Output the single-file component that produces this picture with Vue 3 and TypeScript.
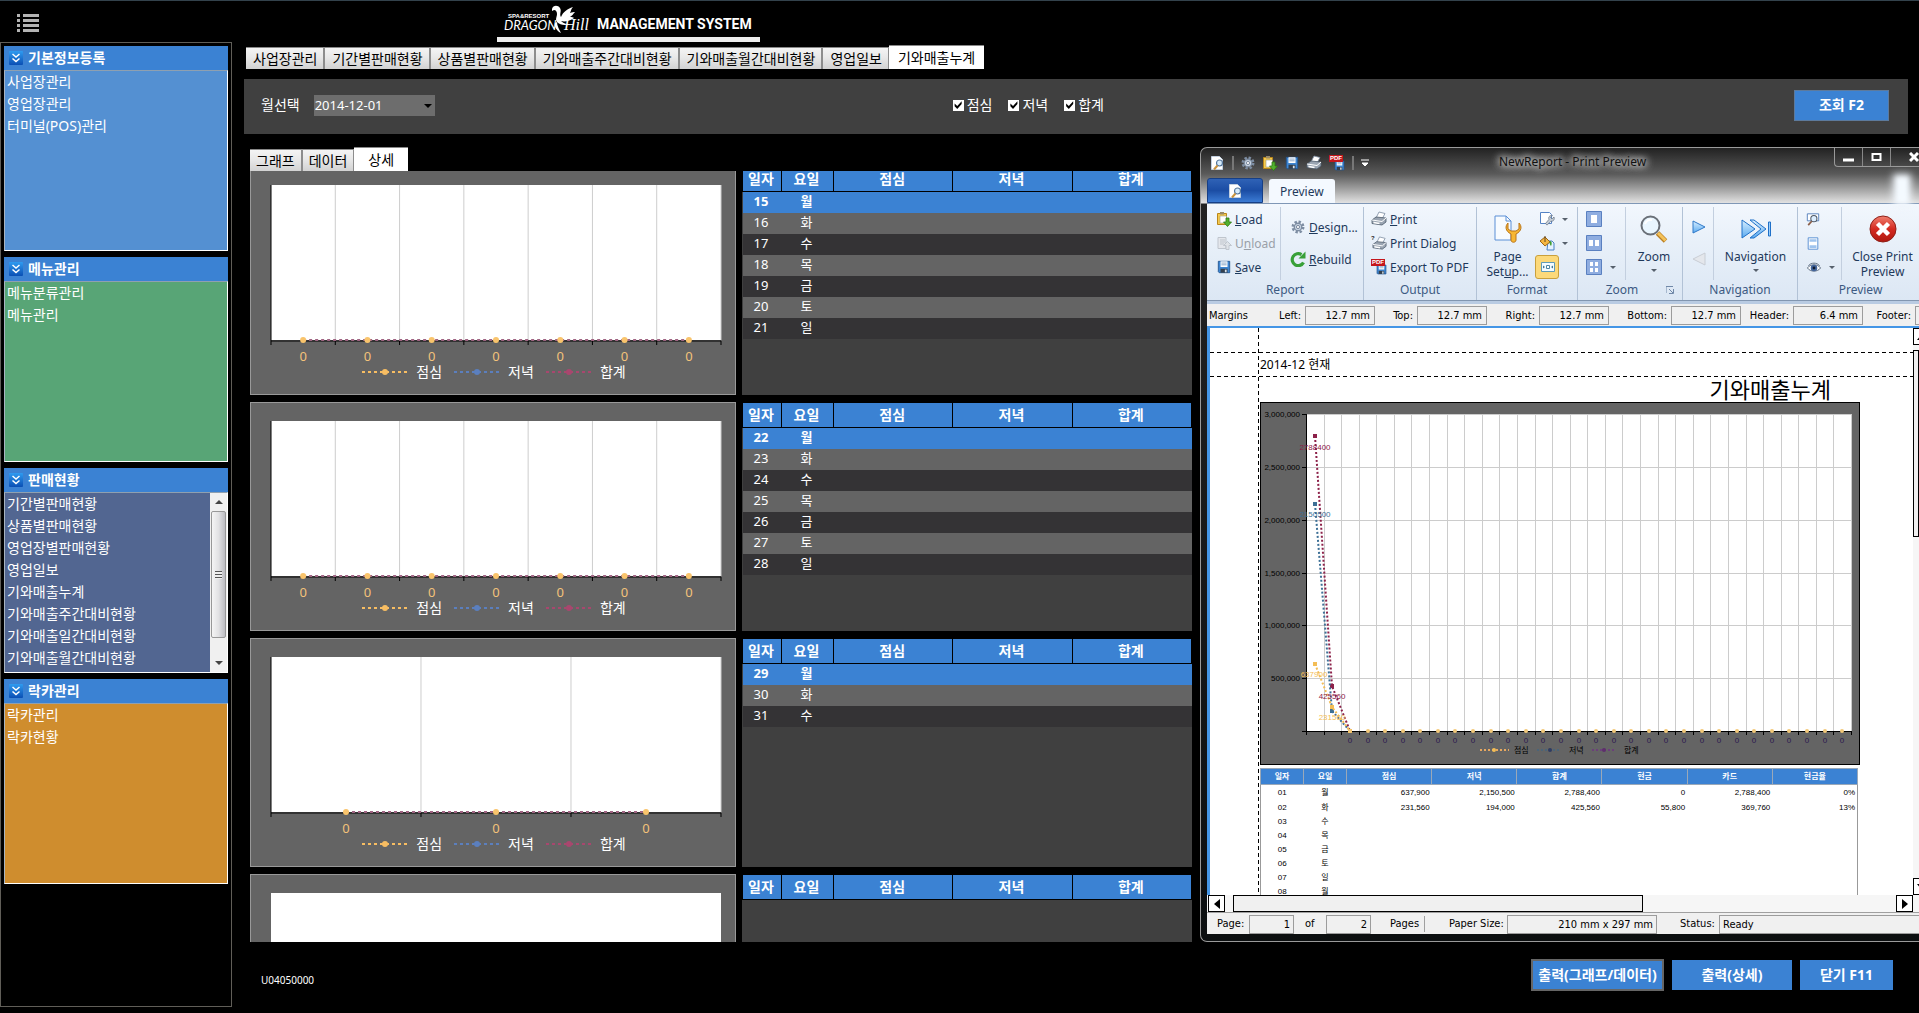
<script setup lang="ts">
import { ref } from 'vue'

interface MenuPanel {
  title: string
  tone: string
  items: string[]
  scroll?: boolean
}

interface Day {
  date: string
  name: string
}

const panels: MenuPanel[] = [
  { title: '기본정보등록', tone: 'blue', items: ['사업장관리', '영업장관리', '터미널(POS)관리'] },
  { title: '메뉴관리', tone: 'green', items: ['메뉴분류관리', '메뉴관리'] },
  {
    title: '판매현황',
    tone: 'indigo',
    scroll: true,
    items: [
      '기간별판매현황',
      '상품별판매현황',
      '영업장별판매현황',
      '영업일보',
      '기와매출누계',
      '기와매출주간대비현황',
      '기와매출일간대비현황',
      '기와매출월간대비현황',
    ],
  },
  { title: '락카관리', tone: 'orange', items: ['락카관리', '락카현황'] },
]

const screens = ['사업장관리', '기간별판매현황', '상품별판매현황', '기와매출주간대비현황', '기와매출월간대비현황', '영업일보', '기와매출누계']
const activeScreen = ref('기와매출누계')
const views = ['그래프', '데이터', '상세']
const activeView = ref('상세')
const month = ref('2014-12-01')

const series = [
  { name: '점심', color: '#f7bd62', on: ref(true) },
  { name: '저녁', color: '#5b7fbe', on: ref(true) },
  { name: '합계', color: '#a8476e', on: ref(true) },
]

const dayNames = ['월', '화', '수', '목', '금', '토', '일']
const week = (start: number, count: number): Day[] =>
  Array.from({ length: count }, (_, i) => ({ date: String(start + i), name: dayNames[i] }))
const weeks: Day[][] = [week(15, 7), week(22, 7), week(29, 3), []]
const columns = ['일자', '요일', '점심', '저녁', '합계']

const pct = (n: number, total: number): string => `${(n / total) * 100}%`

const margins = [
  { id: 'left', label: 'Left:', value: '12.7 mm' },
  { id: 'top', label: 'Top:', value: '12.7 mm' },
  { id: 'right', label: 'Right:', value: '12.7 mm' },
  { id: 'bottom', label: 'Bottom:', value: '12.7 mm' },
  { id: 'header', label: 'Header:', value: '6.4 mm' },
  { id: 'footer', label: 'Footer:', value: '' },
]

/* Monthly report chart: 31 day slots, scale 0 to 3,000,000 */
const plot = { x: 46, y: 12, w: 545, h: 317 }
const slots = 31
const slotX = (i: number): number => Math.round(plot.x + (plot.w * i) / slots)
const pointX = (i: number): number => Math.round(plot.x + (plot.w * (i + 0.5)) / slots)
const valueY = (v: number): number => Math.round(plot.y + plot.h * (1 - v / 3000000))
const ticks = [3000000, 2500000, 2000000, 1500000, 1000000, 500000, 0]
const lines = [
  { color: '#8c2149', values: [2788400, 425560, 0] },
  { color: '#3d7096', values: [2150500, 194000, 0] },
  { color: '#f3bd55', values: [637900, 231560, 0] },
]
const path = (values: number[]): string => values.map((v, i) => `${pointX(i)},${valueY(v)}`).join(' ')

const reportColumns = ['일자', '요일', '점심', '저녁', '합계', '현금', '카드', '현금율']
const reportRows: string[][] = [
  ['01', '월', '637,900', '2,150,500', '2,788,400', '0', '2,788,400', '0%'],
  ['02', '화', '231,560', '194,000', '425,560', '55,800', '369,760', '13%'],
  ['03', '수', '', '', '', '', '', ''],
  ['04', '목', '', '', '', '', '', ''],
  ['05', '금', '', '', '', '', '', ''],
  ['06', '토', '', '', '', '', '', ''],
  ['07', '일', '', '', '', '', '', ''],
  ['08', '월', '', '', '', '', '', ''],
]
</script>

<template>
  <div class="app">
    <svg class="defs" aria-hidden="true">
      <defs>
        <linearGradient id="g-red" x1="0" y1="0" x2="0" y2="1">
          <stop offset="0" stop-color="#f08070" /><stop offset="0.5" stop-color="#d42a20" /><stop offset="1" stop-color="#b01810" />
        </linearGradient>
        <linearGradient id="g-play" x1="0" y1="0" x2="0" y2="1">
          <stop offset="0" stop-color="#d8efff" /><stop offset="1" stop-color="#5aaaf0" />
        </linearGradient>
        <linearGradient id="g-chevron" x1="0" y1="0" x2="0" y2="1">
          <stop offset="0" stop-color="#2f9bf0" /><stop offset="1" stop-color="#0a4fb4" />
        </linearGradient>
      </defs>
      <symbol id="i-chevrons" viewBox="0 0 14 14">
        <rect width="14" height="14" rx="1" fill="url(#g-chevron)" />
        <path d="M3.500 3l3.500 3 3.500-3M3.500 7.500l3.500 3 3.500-3" fill="none" stroke="#fff" stroke-width="1.500" />
      </symbol>
      <symbol id="i-doc" viewBox="0 0 16 16">
        <path d="M2.500 1.500h8l3 3v10h-11z" fill="#fff" stroke="#c3d0e0" />
        <circle cx="10.500" cy="8" r="3" fill="#d6ebfb" stroke="#55779d" stroke-width="1.200" />
        <path d="M8.500 10.500L5 14.500" stroke="#c9933f" stroke-width="2" />
      </symbol>
      <symbol id="i-gear" viewBox="0 0 16 16">
        <circle cx="8" cy="8" r="6" fill="none" stroke="#7d8da2" stroke-width="2.800" stroke-dasharray="2.700 2" />
        <circle cx="8" cy="8" r="4.300" fill="#c6d2e0" stroke="#7d8da2" stroke-width="1.500" />
        <circle cx="8" cy="8" r="1.800" fill="#fff" stroke="#6d7d92" />
      </symbol>
      <symbol id="i-load" viewBox="0 0 16 16">
        <path d="M1.500 2.500h9v11h-9z" fill="#f6c94b" stroke="#b8861b" />
        <path d="M4 5h6.500v7H4z" fill="#fff" stroke="#9c9c8c" stroke-width="0.600" />
        <path d="M4 1h4v2.500H4z" fill="#9a8a68" />
        <path d="M10 7h3v4h2.500l-4 4.500-4-4.500H10z" fill="#52b02f" stroke="#2d7812" stroke-width="0.800" />
      </symbol>
      <symbol id="i-unload" viewBox="0 0 16 16">
        <path d="M2 2.500h8v11H2z" fill="#e4e7ec" stroke="#bfc5cd" />
        <path d="M4 5h5M4 7h5M4 9h4" stroke="#bfc5cd" />
        <path d="M10 14.500v-4H7.500l4-4 4 4H13v4z" fill="#dfe3e8" stroke="#b8bec6" stroke-width="0.800" />
      </symbol>
      <symbol id="i-save" viewBox="0 0 16 16">
        <path d="M1.500 1.500h13v13h-12l-1-1z" fill="#3e86d2" stroke="#22558f" />
        <path d="M4 1.500h8V8H4z" fill="#fff" /><path d="M5 3.500h6M5 5.500h6" stroke="#7c9cc0" />
        <path d="M4 10h8v4.500H4z" fill="#34404e" /><path d="M9 11h2v3H9z" fill="#d8e2ec" />
      </symbol>
      <symbol id="i-print" viewBox="0 0 16 16">
        <path d="M5 7l3-6 6 1.500L11 8z" fill="#fff" stroke="#78899e" stroke-width="0.800" />
        <path d="M1 9l4-3 10 1v4l-4 3-10-1.500z" fill="#9aa5b2" stroke="#4d5b6b" stroke-width="0.800" />
        <path d="M1 9l10 1.500L15 7" fill="none" stroke="#fff" />
        <path d="M2.500 11.500l6 1" stroke="#fff" stroke-width="1.500" />
      </symbol>
      <symbol id="i-wrench" viewBox="0 0 16 16">
        <path d="M1.500 1.500h9l2 2v9h-11z" fill="#fff" stroke="#5583c4" />
        <path d="M15 6l-2 2-1.500-1.500 2-2c-3-.500-4.500 2-3.500 3.800L6.500 12.500l1.500 1.600 4-4c2 .700 4-1.500 3-4.100z" fill="#c3ccd6" stroke="#64717f" stroke-width="0.700" />
      </symbol>
      <symbol id="i-fill" viewBox="0 0 16 16">
        <path d="M9 6h4l2 2v7H8z" fill="#e4f2ff" stroke="#4b82c6" />
        <path d="M1 6l5-4 5 5-5 4z" fill="#f5b641" stroke="#9c6516" />
        <path d="M6 1v6" stroke="#5c4520" /><path d="M11 6c2 0 2 3 1 5-1-1-2-3-1-5z" fill="#3e9c2f" />
      </symbol>
      <symbol id="i-fit" viewBox="0 0 16 16">
        <path d="M1.500 3.500h13v9h-13z" fill="#f3fbff" stroke="#5f9bb8" />
        <path d="M6.500 6.500h3v3h-3z" fill="#fff" stroke="#4f87a5" />
        <path d="M3 6.500v3L5 8zM13 6.500v3L11 8z" fill="#3f7594" />
      </symbol>
      <symbol id="i-glass" viewBox="0 0 28 28">
        <path d="M17.500 18l8 8" stroke="#b97f22" stroke-width="5" />
        <path d="M18 18l7.500 7.500" stroke="#f4c25a" stroke-width="3" />
        <circle cx="10.500" cy="10.500" r="9" fill="#e9f6ff" stroke="#6a7078" stroke-width="2" />
        <path d="M5 9c1-3 4-5 7-4" fill="none" stroke="#fff" stroke-width="2" />
      </symbol>
      <symbol id="i-eye" viewBox="0 0 16 16">
        <path d="M1 8.500C4 4 12 4 15 8.500 12 13 4 13 1 8.500z" fill="#fff" stroke="#58677c" />
        <circle cx="8" cy="8.500" r="3.500" fill="#43659b" /><circle cx="8" cy="8.500" r="1.500" fill="#101c30" />
        <path d="M2 6c3-3.500 9-3.500 12 0" fill="none" stroke="#58677c" />
      </symbol>
      <symbol id="i-find" viewBox="0 0 16 16">
        <path d="M1.500 1.500h13v8h-13z" fill="#fff" stroke="#4c79b8" />
        <circle cx="9" cy="7" r="3.500" fill="#dceeff" stroke="#4f5965" stroke-width="1.200" />
        <path d="M6.500 10L2.500 14.500" stroke="#8b5f48" stroke-width="2" />
      </symbol>
      <symbol id="i-bands" viewBox="0 0 16 16">
        <path d="M2.500 1.500h11v13h-11z" fill="#fff" stroke="#4c87d0" />
        <path d="M4 3h8v3H4zM4 10h8v3H4z" fill="#9fc4ee" />
      </symbol>
    </svg>

    <header class="top">
      <button class="menu-toggle" aria-label="메뉴">
        <svg width="22" height="18">
          <path d="M0 1.500h3M6 1.500h16M0 6.500h3M6 6.500h16M0 11.500h3M6 11.500h16M0 16.500h3M6 16.500h16" stroke="#b4b4b4" stroke-width="3" />
        </svg>
      </button>
      <div class="brand">
        <svg class="logo" width="86" height="32" role="img" aria-label="Dragon Hill">
          <text x="4" y="17" class="logo-tiny">SPA&amp;RESORT</text>
          <text x="0" y="29" class="logo-main">DRAGON</text>
          <text x="60" y="29" class="logo-script">Hill</text>
          <path d="M48 8c1-4 6-4 8-1 2 3-1 6 1 9 2-5 6-8 12-10-2 2-2 4-3 6 2-1 4-1 5-1-2 2-3 4-5 5 2 0 3 0 4 1-4 3-9 4-13 3 3 3 6 3 9 3-5 2-10 1-13-2-2-3 0-5 0-8 0-2-1-4-3-4l-2 1zM53 21c0 4 2 7 4 11-4-2-7-6-6-10z" fill="#fff" />
        </svg>
        <h1>MANAGEMENT SYSTEM</h1>
      </div>
    </header>

    <div class="body">
      <aside class="sidebar">
        <section v-for="p in panels" :key="p.title" class="panel">
          <h2><svg width="14" height="14"><use href="#i-chevrons" /></svg>{{ p.title }}</h2>
          <div class="panel-body" :class="p.tone">
            <ul>
              <li v-for="item in p.items" :key="item"><a href="#">{{ item }}</a></li>
            </ul>
            <div v-if="p.scroll" class="vscroll" aria-hidden="true">
              <span class="arrow up"></span>
              <span class="vthumb"><i></i></span>
              <span class="arrow down"></span>
            </div>
          </div>
        </section>
      </aside>

      <main class="main">
        <nav class="tabs screens">
          <button v-for="s in screens" :key="s" :class="{ active: s === activeScreen }" @click="activeScreen = s">{{ s }}</button>
        </nav>

        <form class="filter" @submit.prevent>
          <label for="month">월선택</label>
          <span class="combo">
            <select id="month" v-model="month"><option>2014-12-01</option></select>
          </span>
          <div class="checks">
            <label v-for="s in series" :key="s.name"><input v-model="s.on.value" type="checkbox" />{{ s.name }}</label>
          </div>
          <button class="action search">조회 F2</button>
        </form>

        <nav class="tabs sub">
          <button v-for="v in views" :key="v" :class="{ active: v === activeView }" @click="activeView = v">{{ v }}</button>
        </nav>

        <div class="scroller">
          <div class="weeks">
            <section v-for="(days, w) in weeks" :key="w" class="week">
              <div class="chart">
                <svg class="plot" width="100%" height="176">
                  <rect width="100%" height="155" fill="#fff" />
                  <template v-if="days.length">
                    <line v-for="i in days.length" :key="i" :x1="pct(i, days.length)" :x2="pct(i, days.length)" y1="0" y2="155" stroke="#cdcdcd" />
                    <path d="M0 0V160" stroke="#000" />
                    <line x1="0" x2="100%" y1="156" y2="156" stroke="#000" />
                    <line v-for="i in days.length" :key="'t' + i" :x1="pct(i, days.length)" :x2="pct(i, days.length)" y1="156" y2="160" stroke="#000" />
                    <line :x1="pct(0.5, days.length)" :x2="pct(days.length - 0.5, days.length)" y1="155" y2="155" stroke="#a06583" stroke-width="2" stroke-dasharray="3 3" />
                    <template v-for="(d, i) in days" :key="d.date">
                      <circle :cx="pct(i + 0.5, days.length)" cy="155" r="3" fill="#f9c46c" />
                      <text :x="pct(i + 0.5, days.length)" y="176" class="zero">0</text>
                    </template>
                  </template>
                </svg>
                <div v-if="days.length" class="legend">
                  <span v-for="s in series" :key="s.name">
                    <svg width="47" height="8">
                      <path d="M0 4h47" :stroke="s.color" stroke-width="2" stroke-dasharray="3 3" />
                      <circle cx="23" cy="4" r="3" :fill="s.color" />
                    </svg>{{ s.name }}
                  </span>
                </div>
              </div>
              <div class="grid-box">
                <table class="days">
                  <colgroup><col class="c-date" /><col class="c-day" /><col /><col /><col /></colgroup>
                  <thead><tr><th v-for="c in columns" :key="c">{{ c }}</th></tr></thead>
                  <tbody>
                    <tr v-for="d in days" :key="d.date"><td>{{ d.date }}</td><td>{{ d.name }}</td><td></td><td></td><td></td></tr>
                  </tbody>
                </table>
              </div>
            </section>
          </div>
        </div>

        <footer class="foot">
          <span class="code">U04050000</span>
          <button class="action wide">출력(그래프/데이터)</button>
          <button class="action mid">출력(상세)</button>
          <button class="action small">닫기 F11</button>
        </footer>
      </main>
    </div>

    <section class="window" aria-label="Print Preview">
      <div class="titlebar">
        <div class="quick">
          <svg width="16" height="16"><use href="#i-doc" /></svg>
          <i class="vsep"></i>
          <svg width="14" height="14"><use href="#i-gear" /></svg>
          <svg width="16" height="16"><use href="#i-load" /></svg>
          <svg width="14" height="14"><use href="#i-save" /></svg>
          <svg width="16" height="16"><use href="#i-print" /></svg>
          <span class="pdf"><b>PDF</b><svg width="11" height="11"><use href="#i-save" /></svg></span>
          <i class="vsep"></i>
          <svg width="8" height="8"><path d="M0 1h8M1 4h6L4 7z" stroke="#fff" fill="#fff" /></svg>
        </div>
        <p>NewReport - Print Preview</p>
        <div class="caption">
          <button aria-label="Minimize"><svg width="11" height="11"><path d="M0 8h11" stroke="#fff" stroke-width="3" /></svg></button>
          <button aria-label="Maximize"><svg width="11" height="11"><path d="M1.500 2h8v6h-8z" fill="none" stroke="#fff" stroke-width="2" /></svg></button>
          <button aria-label="Close" class="x"><svg width="10" height="11"><path d="M1 1l8 8M9 1L1 9" stroke="#fff" stroke-width="3" /></svg></button>
        </div>
      </div>
      <div class="ribbon-tabs">
        <button class="file" aria-label="File"><svg width="16" height="16"><use href="#i-doc" /></svg></button>
        <button class="tab">Preview</button>
        <i class="glow"></i>
      </div>

      <div class="ribbon">
        <div class="group g-report">
          <div class="tools">
            <div class="stack">
              <button><svg width="16" height="16"><use href="#i-load" /></svg><u>L</u>oad</button>
              <button disabled><svg width="16" height="16"><use href="#i-unload" /></svg>U<u>n</u>load</button>
              <button><svg width="16" height="14"><use href="#i-save" /></svg><u>S</u>ave</button>
            </div>
            <div class="stack two line">
              <button><svg width="16" height="14"><use href="#i-gear" /></svg><u>D</u>esign...</button>
              <button>
                <svg width="16" height="16" viewBox="0 0 16 16">
                  <path d="M13.500 11.500A6 6 0 1 1 11.500 3.600" fill="none" stroke="#38a038" stroke-width="3.200" />
                  <path d="M8.500 7.500h7V.5z" fill="#38a038" />
                </svg><u>R</u>ebuild
              </button>
            </div>
          </div>
          <h3>Report</h3>
        </div>
        <div class="group g-output">
          <div class="tools">
            <div class="stack tight">
              <button><svg width="16" height="16"><use href="#i-print" /></svg><u>P</u>rint</button>
              <button><span class="pdf help"><em>?</em><svg width="15" height="15"><use href="#i-print" /></svg></span>Print Dialog</button>
              <button><span class="pdf"><b>PDF</b><svg width="11" height="11"><use href="#i-save" /></svg></span>Export To PDF</button>
            </div>
          </div>
          <h3>Output</h3>
        </div>
        <div class="group g-format">
          <div class="tools">
            <button class="big">
              <svg width="28" height="28" viewBox="0 0 28 28">
                <path d="M1 1h11l5 5v19H1z" fill="#f7fbff" stroke="#5a8fd6" />
                <path d="M12 1v5h5" fill="none" stroke="#5a8fd6" />
                <path d="M14 8c-3 3-3 8 3 11v6c0 3 5 3 5 0v-6c6-3 6-8 3-11v6l-3 2h-5l-3-2z" fill="#f7b733" stroke="#b9751a" />
              </svg>
              <span>Page<br />Set<u>u</u>p...</span>
            </button>
            <div class="icons">
              <button aria-label="Scale"><svg width="16" height="16"><use href="#i-wrench" /></svg><i class="drop"></i></button>
              <button aria-label="Background"><svg width="16" height="16"><use href="#i-fill" /></svg><i class="drop"></i></button>
              <button aria-label="Shrink to page" class="on"><svg width="16" height="16"><use href="#i-fit" /></svg></button>
            </div>
          </div>
          <h3>Format</h3>
        </div>
        <div class="group g-zoom">
          <div class="tools">
            <div class="icons">
              <button aria-label="One page"><svg width="16" height="16"><path d="M.5.5h15v15H.5z" fill="#8fade0" stroke="#5a80c0" /><path d="M5 4h6v8H5z" fill="#fff" /></svg></button>
              <button aria-label="Two pages"><svg width="16" height="16"><path d="M.5.5h15v15H.5z" fill="#8fade0" stroke="#5a80c0" /><path d="M3 5h4v6H3zM9 5h4v6H9z" fill="#fff" /></svg></button>
              <button aria-label="Many pages"><svg width="16" height="16"><path d="M.5.5h15v15H.5z" fill="#8fade0" stroke="#5a80c0" /><path d="M4 3h3v4H4zM9 3h3v4H9zM4 9h3v4H4zM9 9h3v4H9z" fill="#fff" /></svg><i class="drop far"></i></button>
            </div>
            <button class="big line"><svg width="28" height="28"><use href="#i-glass" /></svg><span>Zoom</span><i class="drop"></i></button>
          </div>
          <div class="caption-row">
            <h3>Zoom</h3>
            <svg width="8" height="8"><path d="M0 7V.5h7M3 3l4 4M7.500 3v4.500H3" fill="none" stroke="#7088a8" /></svg>
          </div>
        </div>
        <div class="group g-nav">
          <div class="tools">
            <div class="stack two play">
              <button aria-label="Next"><svg width="14" height="14"><path d="M1 1l12 6-12 6z" fill="url(#g-play)" stroke="#2f78c8" /></svg></button>
              <button aria-label="Previous"><svg width="14" height="14"><path d="M13 1L1 7l12 6z" fill="#e4e7ec" stroke="#c8cdd4" /></svg></button>
            </div>
            <button class="big line">
              <svg width="32" height="28" viewBox="0 0 32 28">
                <path d="M2 5l13 9-13 9z" fill="url(#g-play)" stroke="#1f70c8" />
                <path d="M10 5h4l12 9-12 9h-4l11-9z" fill="url(#g-play)" stroke="#1f70c8" />
                <path d="M28.500 7h2v14h-2z" fill="#9bcdf8" stroke="#1f70c8" />
              </svg><span>Navigation</span><i class="drop"></i>
            </button>
          </div>
          <h3>Navigation</h3>
        </div>
        <div class="group g-preview">
          <div class="tools">
            <div class="icons">
              <button aria-label="Find"><svg width="14" height="15"><use href="#i-find" /></svg></button>
              <button aria-label="Bands"><svg width="14" height="15"><use href="#i-bands" /></svg></button>
              <button aria-label="Show"><svg width="16" height="15"><use href="#i-eye" /></svg><i class="drop"></i></button>
            </div>
            <button class="big line">
              <svg width="28" height="28"><circle cx="14" cy="14" r="13" fill="url(#g-red)" stroke="#8e2018" /><path d="M8.500 8.500l11 11M19.500 8.500l-11 11" stroke="#fff" stroke-width="4.500" /></svg>
              <span>Close Print<br />Preview</span>
            </button>
          </div>
          <h3>Preview</h3>
        </div>
      </div>

      <div class="margins">
        <span class="cap">Margins</span>
        <template v-for="m in margins" :key="m.id">
          <label :for="'m-' + m.id">{{ m.label }}</label>
          <input :id="'m-' + m.id" :value="m.value" readonly />
        </template>
      </div>

      <div class="view">
        <div class="sheet">
          <p class="asof">2014-12 현재</p>
          <h4>기와매출누계</h4>
          <svg class="report-chart" width="600" height="363">
            <rect x="0.500" y="0.500" width="599" height="362" fill="#646464" stroke="#000" />
            <rect :x="plot.x" :y="plot.y" :width="plot.w" :height="plot.h" fill="#fff" />
            <g shape-rendering="crispEdges">
              <line v-for="i in slots" :key="i" :x1="slotX(i)" :x2="slotX(i)" :y1="plot.y" :y2="plot.y + plot.h" stroke="#ccc" />
              <line v-for="t in ticks" :key="t" :x1="plot.x" :x2="plot.x + plot.w" :y1="valueY(t)" :y2="valueY(t)" stroke="#ccc" />
              <line v-for="t in ticks" :key="'k' + t" :x1="plot.x - 4" :x2="plot.x" :y1="valueY(t)" :y2="valueY(t)" stroke="#000" />
              <line v-for="i in slots" :key="'b' + i" :x1="slotX(i)" :x2="slotX(i)" y1="329" y2="333" stroke="#000" />
              <path d="M46 12V333M46 329H591" stroke="#000" />
            </g>
            <text v-for="t in ticks.slice(0, 6)" :key="'l' + t" x="40" :y="valueY(t) + 3" class="axis">{{ t.toLocaleString('en-US') }}</text>
            <g v-for="l in lines" :key="l.color">
              <polyline :points="path(l.values)" fill="none" :stroke="l.color" stroke-width="2" stroke-dasharray="2 2" />
              <rect v-for="(v, i) in l.values" :key="i" :x="pointX(i) - 2" :y="valueY(v) - 2" width="4" height="4" :fill="l.color" />
            </g>
            <g class="mark">
              <text x="55" y="48" fill="#8c2149">2788400</text>
              <text x="55" y="115" fill="#3d7096">2150500</text>
              <text x="54" y="275" fill="#f3bd55">637900</text>
              <text x="72" y="297" fill="#8c2149">425560</text>
              <text x="72" y="318" fill="#f3bd55">231560</text>
              <template v-for="i in slots - 2" :key="i">
                <circle :cx="pointX(i + 1)" cy="329" r="2" fill="#f3c878" />
                <text :x="pointX(i + 1)" y="341" fill="#2c1a50">0</text>
              </template>
            </g>
            <g stroke-width="2" stroke-dasharray="2 2">
              <path d="M220 348h29" stroke="#e8a860" /><path d="M277 348h24" stroke="#4b6478" /><path d="M332 348h24" stroke="#6b3f7a" />
            </g>
            <circle cx="234" cy="348" r="2" fill="#f3bd55" /><circle cx="290" cy="348" r="2" fill="#2f3c62" /><circle cx="344" cy="348" r="2" fill="#5e2f6c" />
            <g class="mini"><text x="254" y="351">점심</text><text x="309" y="351">저녁</text><text x="364" y="351">합계</text></g>
          </svg>
          <table class="report">
            <colgroup><col class="r-date" /><col class="r-date" /><col /><col /><col /><col /><col /><col /></colgroup>
            <thead><tr><th v-for="c in reportColumns" :key="c">{{ c }}</th></tr></thead>
            <tbody>
              <tr v-for="r in reportRows" :key="r[0]"><td v-for="(c, i) in r" :key="i">{{ c }}</td></tr>
            </tbody>
          </table>
        </div>
        <div class="side-scroll" aria-hidden="true">
          <span class="sq"><svg width="10" height="6"><path d="M0 6h10L5 0z" /></svg></span>
          <span class="thumb"></span><span class="fill"></span>
          <span class="sq"><svg width="10" height="6"><path d="M0 0h10L5 6z" /></svg></span>
        </div>
      </div>
      <div class="h-scroll" aria-hidden="true">
        <span class="sq"><svg width="6" height="10"><path d="M6 0v10L0 5z" /></svg></span>
        <span class="thumb"></span><span class="fill"></span>
        <span class="sq"><svg width="6" height="10"><path d="M0 0v10l6-5z" /></svg></span>
      </div>
      <div class="status">
        <label for="page">Page:</label><input id="page" class="num" value="1" readonly />
        <label for="pages" class="of">of</label><input id="pages" class="num" value="2" readonly />
        <span class="pages">Pages</span>
        <label for="paper" class="paper-label">Paper Size:</label><input id="paper" class="paper" value="210 mm x 297 mm" readonly />
        <label for="state" class="state-label">Status:</label><input id="state" class="state" value="Ready" readonly />
      </div>
    </section>
  </div>
</template>

<style>
body {
  background: #000;
}
</style>

<style scoped>
* {
  box-sizing: border-box;
}
.app {
  position: relative;
  display: flex;
  flex-direction: column;
  height: 100vh;
  overflow: hidden;
  border-top: 1px solid #33424c;
  background: #000;
  color: #fff;
  font: 14px/22px 'Noto Sans', 'Noto Sans CJK KR', sans-serif;
}
.defs {
  position: absolute;
  width: 0;
  height: 0;
}
button,
input,
select {
  margin: 0;
  padding: 0;
  border: 0;
  background: none;
  color: inherit;
  font: inherit;
}
h1,
h2,
h3,
h4,
p,
ul {
  margin: 0;
  padding: 0;
  list-style: none;
}
a {
  color: inherit;
  text-decoration: none;
}
svg {
  flex: none;
}
table {
  border-collapse: collapse;
  table-layout: fixed;
}

.top {
  display: flex;
  flex: none;
  height: 41px;
}
.menu-toggle {
  display: flex;
  width: 497px;
  padding: 13px 17px;
}
.brand {
  display: flex;
  width: 263px;
  padding-left: 7px;
  border-bottom: 5px solid #eee;
}
.logo {
  overflow: visible;
}
.logo text {
  fill: #fff;
}
.logo-tiny {
  font: bold 6px 'Liberation Sans', sans-serif;
}
.logo-main {
  font: italic 13px Lato, sans-serif;
}
.logo-script {
  font: italic 16px 'Liberation Serif', serif;
}
h1 {
  padding: 13px 0 0 7px;
  font: bold 14px/20px Roboto, sans-serif;
}

.body {
  display: flex;
  flex: 1;
  min-height: 0;
}
.sidebar {
  display: flex;
  flex: none;
  flex-direction: column;
  gap: 6px;
  width: 232px;
  margin-bottom: 6px;
  padding: 3px;
  border: 1px solid #605e58;
}
.panel {
  display: flex;
  flex-direction: column;
  height: 205px;
}
.panel h2 {
  display: flex;
  align-items: center;
  gap: 5px;
  height: 24px;
  padding-left: 5px;
  background: #3b82d3;
  font-size: 14px;
}
.panel-body {
  display: flex;
  flex: 1;
  border: 1px solid #fff;
  border-top-color: #8fa0b0;
  border-left-color: #a8b4c0;
}
.panel ul {
  flex: 1;
  padding-left: 2px;
}
.blue {
  background: #5490d2;
}
.green {
  background: #58a576;
}
.indigo {
  background: #526691;
}
.orange {
  background: #cf8d2e;
}
.vscroll {
  display: flex;
  flex-direction: column;
  width: 17px;
  padding: 0 1px;
  background: #f0f0f0;
}
.arrow {
  display: flex;
  align-items: center;
  justify-content: center;
  height: 18px;
}
.arrow::after {
  border: 4px solid transparent;
  content: '';
}
.up::after {
  margin-bottom: 4px;
  border-bottom-color: #444;
}
.down::after {
  margin-top: 4px;
  border-top-color: #444;
}
.vthumb {
  display: flex;
  align-items: center;
  justify-content: center;
  height: 127px;
  margin-bottom: auto;
  border: 1px solid #989898;
  border-radius: 2px;
  background: linear-gradient(90deg, #f5f5f5, #e2e2e4 50%, #bcbcc2);
}
.vthumb i {
  width: 7px;
  height: 8px;
  background: repeating-linear-gradient(#555 0 1px, #eee 1px 3px);
}

.main {
  display: flex;
  flex: 1;
  flex-direction: column;
  min-width: 0;
  padding: 3px 11px 0 12px;
}
.tabs {
  display: flex;
  flex: none;
  align-items: flex-end;
  gap: 2px;
  height: 24px;
  padding-left: 2px;
}
.tabs button {
  height: 22px;
  padding: 0 6px;
  border-top: 1px solid #888;
  background: linear-gradient(#f4f4f4, #e8e8e8 45%, #d2d2d2);
  box-shadow: 2px 0 #8d8d8d;
  color: #000;
  line-height: 21px;
  white-space: nowrap;
}
.tabs.screens button {
  padding: 0 6px 0 7px;
}
.tabs .active,
.tabs.screens .active {
  height: 24px;
  margin-left: -1px;
  padding: 0 9px;
  background: #fff;
  box-shadow: none;
}
.filter {
  display: flex;
  flex: none;
  align-items: center;
  height: 55px;
  margin-top: 10px;
  padding: 0 19px 3px 17px;
  background: #404040;
}
.combo {
  position: relative;
  display: flex;
  margin-left: 14px;
}
.combo::after {
  position: absolute;
  top: 9px;
  right: 3px;
  border: 4px solid transparent;
  border-top-color: #000;
  content: '';
  pointer-events: none;
}
.combo select {
  width: 121px;
  height: 21px;
  padding-left: 1px;
  background: #6d6d6d;
  font-size: 13px;
  line-height: 20px;
  appearance: none;
}
.checks {
  display: flex;
  gap: 16px;
  margin: 0 auto 0 518px;
}
.checks label {
  display: flex;
  align-items: center;
  gap: 3px;
}
.checks input {
  width: 11px;
  height: 11px;
  background: #fff;
  appearance: none;
}
.checks input:checked::after {
  display: block;
  width: 11px;
  height: 11px;
  background: #000;
  clip-path: polygon(18% 36%, 42% 58%, 82% 16%, 82% 42%, 42% 86%, 18% 62%);
  content: '';
}
.action {
  flex: none;
  height: 30px;
  background: #3b82d3;
  color: #fff;
  font-weight: bold;
}
.search {
  width: 95px;
  height: 31px;
  border: 1px solid #5d7a9c;
}
.tabs.sub {
  margin-top: 13px;
  padding-left: 6px;
}
.tabs.sub .active {
  padding: 0 14px;
}
.scroller {
  flex: 1;
  min-height: 0;
  overflow: hidden;
  padding-left: 6px;
}
.weeks {
  display: flex;
  flex-direction: column;
  gap: 7px;
  max-width: 942px;
  margin-top: -5px;
}
.week {
  display: grid;
  grid-template-columns: 486fr 450fr;
  gap: 6px;
  height: 229px;
}
.chart {
  padding: 18px 14px 0 20px;
  border: 1px solid #999;
  background: #646464;
}
.plot {
  display: block;
  overflow: visible;
}
.zero {
  fill: #f3c27a;
  font-size: 13px;
  text-anchor: middle;
}
.legend {
  display: flex;
  gap: 12px;
  justify-content: center;
  margin-right: 4px;
}
.legend span {
  display: flex;
  align-items: center;
  gap: 7px;
}
.grid-box {
  background: #404040;
}
.days {
  width: 100%;
  color: #fff;
  text-align: center;
}
.c-date {
  width: 39px;
}
.c-day {
  width: 52px;
}
.days th,
.days td {
  padding: 0 2px 2px 0;
}
.days th {
  height: 25px;
  border: 1px solid #000;
  background: #3b82d3;
  line-height: 21px;
}
.days td {
  height: 21px;
  font-size: 13px;
  line-height: 19px;
}
.days tbody tr {
  background: #343335;
}
.days tbody tr:nth-child(even) {
  background: #646464;
}
.days tbody tr:first-child {
  background: #3b82d3;
  font-weight: bold;
}
.foot {
  display: flex;
  flex: none;
  align-items: flex-start;
  gap: 8px;
  height: 71px;
  padding: 18px 15px 0 17px;
}
.code {
  flex: 1;
  padding-top: 9px;
  font-size: 10px;
}
.wide {
  width: 133px;
  height: 32px;
  margin-top: -1px;
  border: 2px solid #666;
}
.mid {
  width: 120px;
}
.small {
  width: 93px;
}

.window {
  position: absolute;
  top: 146px;
  right: 0;
  bottom: 71px;
  left: 1200px;
  display: flex;
  flex-direction: column;
  overflow: hidden;
  padding: 0 0 7px 6px;
  border: 1px solid #9a9a9a;
  border-right: 0;
  border-radius: 7px 0 0 7px;
  background: linear-gradient(#222, #5a5a5a 26px, #e2e2e2 55px, #222 56px, #0c0f10);
  color: #1e395b;
  font-size: 12px;
  line-height: 15px;
}
.titlebar {
  position: relative;
  display: flex;
  flex: none;
  height: 30px;
}
.quick {
  display: flex;
  align-items: center;
  gap: 7px;
  padding-left: 2px;
}
.vsep {
  width: 2px;
  height: 14px;
  border: solid #777;
  border-width: 0 1px;
}
.titlebar p {
  padding: 6px 6px 0 130px;
  color: #111;
  text-shadow: 0 0 6px #ddd, 0 0 8px #ddd, 0 0 10px #ccc;
  white-space: nowrap;
}
.pdf {
  position: relative;
  display: flex;
  align-items: flex-end;
  justify-content: flex-end;
  width: 16px;
  height: 16px;
}
.pdf b,
.pdf em {
  position: absolute;
  top: 0;
  left: 0;
  padding: 0 1px;
  background: #c4161c;
  color: #fff;
  font: bold 6px/7px 'Liberation Sans', sans-serif;
}
.pdf em {
  padding: 0;
  background: none;
  color: #222;
}
.caption {
  display: flex;
  height: 19px;
  margin-left: auto;
  border: 1px solid #999;
  border-width: 0 0 1px 1px;
  border-radius: 0 0 0 4px;
}
.caption button {
  display: flex;
  align-items: center;
  justify-content: center;
  width: 28px;
  border-right: 1px solid #888;
}
.caption .x {
  justify-content: flex-end;
  border: 0;
}
.ribbon-tabs {
  display: flex;
  flex: none;
  align-items: flex-end;
  gap: 6px;
  height: 25px;
}
.file {
  display: flex;
  align-items: center;
  justify-content: center;
  width: 56px;
  height: 25px;
  border: 1px solid #163f86;
  border-radius: 3px 3px 0 0;
  background: linear-gradient(#2f62b6, #1b4da4 50%, #3b7bd4);
}
.tab {
  height: 24px;
  padding: 0 11px;
  border-radius: 3px 3px 0 0;
  background: #f4f9ff;
}
.glow {
  width: 12px;
  height: 26px;
  margin: 0 11px 0 auto;
  background: #f4faff;
  box-shadow: 0 0 6px 3px #eef4fa;
  filter: blur(2px);
}
.ribbon {
  display: flex;
  flex: none;
  height: 98px;
  padding-top: 3px;
  border-top: 1px solid #7f97b6;
  border-bottom: 1px solid #8296b0;
  background: linear-gradient(#f2f7fd, #e8f0f9 40%, #dce7f4);
}
.group {
  display: flex;
  flex: none;
  flex-direction: column;
  border-right: 1px solid #b2c2d6;
}
.g-report {
  width: 157px;
}
.g-output {
  width: 113px;
}
.g-format {
  width: 101px;
}
.g-zoom {
  width: 105px;
}
.g-nav {
  width: 115px;
}
.g-preview {
  width: 126px;
}
.tools {
  display: flex;
  height: 73px;
}
.group h3 {
  flex: 1;
  color: #3c5a82;
  font-weight: normal;
  font-size: 12px;
  line-height: 20px;
  text-align: center;
}
.caption-row {
  display: flex;
  align-items: center;
  padding-right: 8px;
}
.stack {
  display: flex;
  flex-direction: column;
  width: 73px;
  padding-left: 9px;
}
.tight {
  padding-left: 7px;
  width: auto;
}
.stack button {
  display: flex;
  align-items: center;
  height: 24px;
  white-space: nowrap;
}
.stack button > svg,
.stack .pdf {
  margin-right: 3px;
}
.stack button:disabled {
  color: #9aa0a8;
}
.two {
  width: auto;
  padding-top: 4px;
}
.two button {
  height: 32px;
}
.line {
  border-left: 1px solid #c3cfdf;
}
.play {
  width: 30px;
}
.big {
  display: flex;
  flex: 1;
  flex-direction: column;
  align-items: center;
  padding-top: 8px;
  white-space: nowrap;
}
.big span {
  margin-top: 6px;
}
.big .drop {
  margin: 5px 0 0;
}
.drop {
  width: 5px;
  margin-left: 7px;
  border: 3px solid transparent;
  border-top-color: #56606c;
  border-bottom: 0;
}
.far {
  margin-left: 8px;
}
.icons {
  display: flex;
  flex-direction: column;
  padding-left: 8px;
}
.icons button {
  display: flex;
  align-items: center;
  height: 24px;
}
.g-format .big {
  padding-left: 3px;
}
.g-format .icons {
  width: 42px;
  padding-left: 0;
}
.g-format .icons button {
  padding-left: 4px;
}
.g-format .on {
  width: 24px;
  padding-left: 3px;
  border: 1px solid #c9a03c;
  border-radius: 3px;
  background: #fcd97a;
}
.g-zoom .icons {
  width: 47px;
}
.g-preview .icons {
  width: 43px;
}

.margins,
.status {
  display: flex;
  flex: none;
  align-items: center;
  background: #f0f0f0;
  color: #000;
  font: 11px/16px 'DejaVu Sans Condensed', 'DejaVu Sans', sans-serif;
}
.margins {
  height: 25px;
  padding-top: 1px;
  border-top: 3px solid #b9cbe2;
}
.margins .cap {
  flex: none;
  width: 53px;
  padding-left: 2px;
}
.margins label {
  flex: none;
  width: 45px;
  padding-right: 4px;
  text-align: right;
}
.margins input,
.status input {
  flex: none;
  border: 1px solid #9c9c9c;
  text-align: right;
}
.margins input {
  width: 70px;
  height: 19px;
  padding-right: 4px;
}
.margins label:nth-of-type(2) {
  width: 42px;
}
.margins label:nth-of-type(3),
.margins label:nth-of-type(5),
.margins label:nth-of-type(6) {
  width: 52px;
}
.margins label:nth-of-type(4) {
  width: 62px;
}
.view {
  display: flex;
  flex: 1;
  min-height: 0;
  border: solid #4596e6;
  border-width: 2px 0 0 3px;
  background: #fff;
  color: #000;
}
.sheet {
  flex: 1;
  overflow: hidden;
  padding: 24px 0 0 50px;
  background:
    repeating-linear-gradient(#000 0 4px, transparent 4px 7px) 48px 0 / 1px 100% no-repeat,
    repeating-linear-gradient(90deg, #000 0 4px, transparent 4px 7px) 0 24px / 100% 1px no-repeat,
    repeating-linear-gradient(90deg, #000 0 4px, transparent 4px 7px) 0 48px / 100% 1px no-repeat;
}
.asof {
  height: 24px;
  font-size: 12px;
  line-height: 26px;
}
.sheet h4 {
  width: 600px;
  height: 26px;
  padding-right: 29px;
  font: 400 22px/24px 'Noto Sans CJK KR', sans-serif;
  text-align: right;
}
.report-chart {
  display: block;
}
.axis {
  font: 8px 'Liberation Sans', sans-serif;
  text-anchor: end;
}
.mark {
  font: 8px 'Liberation Sans', sans-serif;
  text-anchor: middle;
}
.mini {
  font: 8px 'Noto Sans CJK KR', sans-serif;
}
.report {
  width: 598px;
  margin-top: 3px;
  border: 1px solid #999;
  font: 8px/14px 'Liberation Sans', 'Noto Sans CJK KR', sans-serif;
  text-align: right;
}
.r-date {
  width: 43px;
}
.report th {
  height: 16px;
  padding: 0;
  border: 1px solid #9aa8b8;
  background: #3b82d3;
  color: #fff;
  text-align: center;
}
.report td {
  height: 14px;
  padding: 0 2px;
}
.report tr:first-child td {
  height: 16px;
}
.report td:nth-child(-n + 2) {
  text-align: center;
}
.side-scroll {
  display: flex;
  flex: none;
  flex-direction: column;
  width: 6px;
  overflow: hidden;
  background: #f6f6f6;
}
.sq {
  display: flex;
  flex: none;
  align-items: center;
  justify-content: center;
  width: 17px;
  height: 17px;
  border: 1px solid #000;
  background: #fff;
}
.side-scroll .thumb {
  height: 187px;
  margin-top: 5px;
}
.thumb {
  flex: none;
  border: 1px solid #000;
  background: #f0f0f0;
}
.fill {
  flex: 1;
}
.h-scroll {
  display: flex;
  flex: none;
  height: 17px;
  padding: 0 6px 0 1px;
  background: #f6f6f6;
}
.h-scroll .thumb {
  width: 410px;
  margin-left: 8px;
}
.status {
  height: 22px;
  padding: 1px 0 0 10px;
  border-top: 1px solid #a0a0a0;
}
.status label {
  width: 32px;
}
.status input {
  height: 19px;
  padding: 0 3px;
}
.status .num {
  width: 45px;
}
.status .of {
  padding-left: 11px;
}
.pages {
  width: 54px;
  padding-left: 19px;
  border-right: 1px solid #a0a0a0;
}
.status .paper-label {
  width: 82px;
  padding-left: 24px;
  white-space: nowrap;
}
.status .paper {
  width: 150px;
}
.status .state-label {
  width: 62px;
  padding-left: 23px;
}
.status .state {
  flex: 1;
  min-width: 0;
  border-right: 0;
  text-align: left;
}
</style>
